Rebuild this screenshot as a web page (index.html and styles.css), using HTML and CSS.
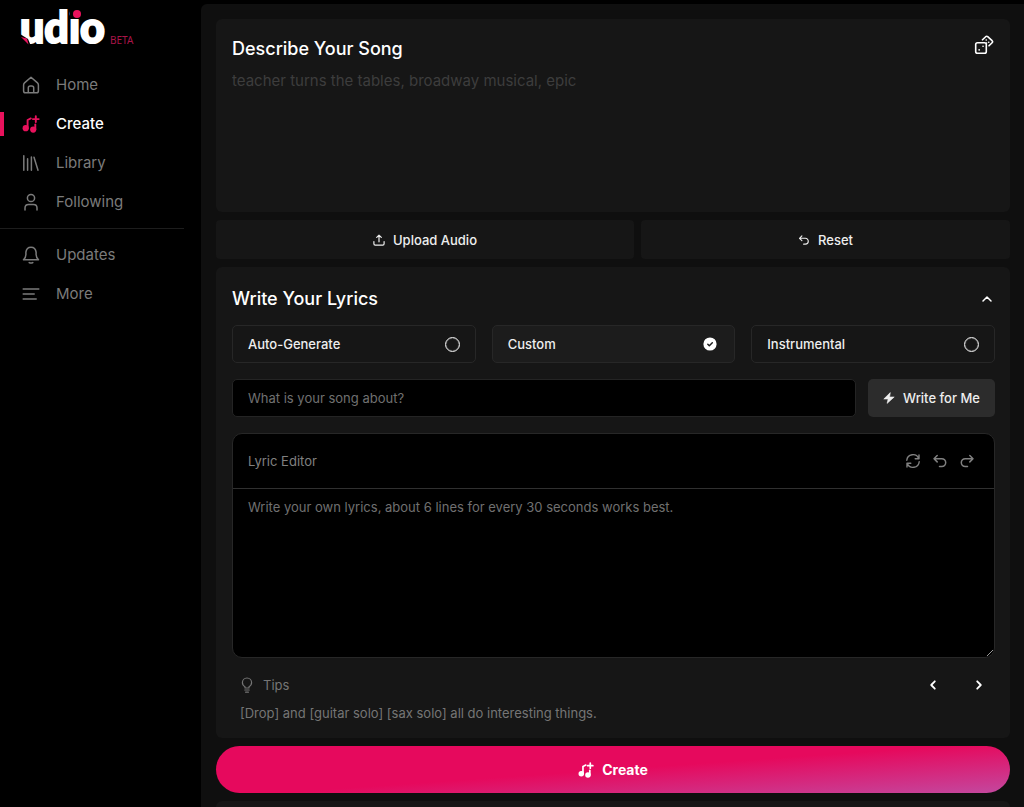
FILE: index.html
```html
<!DOCTYPE html>
<html lang="en">
<head>
<meta charset="utf-8">
<meta name="viewport" content="width=device-width, initial-scale=1">
<title>Udio - Create</title>
<link rel="stylesheet" href="styles.css">
</head>
<body>
<svg class="defs" width="0" height="0" aria-hidden="true">
  <symbol id="i-note" viewBox="0 0 18 18">
    <path d="M5.6 13.500V5L8.800 3.400" fill="none" stroke="currentColor" stroke-width="1.900" stroke-linecap="round"/>
    <path d="M13.300 14.500V9.500" fill="none" stroke="currentColor" stroke-width="1.900" stroke-linecap="round"/>
    <circle cx="3.700" cy="13.200" r="3.100" fill="currentColor"/>
    <circle cx="11.200" cy="14.600" r="3.100" fill="currentColor"/>
    <path d="M13.800 1.200v5.800M10.900 4.100h5.800" fill="none" stroke="currentColor" stroke-width="1.900" stroke-linecap="round"/>
  </symbol>
  <symbol id="i-undo" viewBox="0 0 16 16">
    <path d="M5.2 2.5 2 5.7l3.2 3.2M2 5.7h7.8a3.9 3.9 0 0 1 0 7.800H7.5" fill="none" stroke="currentColor" stroke-width="1.500" stroke-linecap="round" stroke-linejoin="round"/>
  </symbol>
</svg>
<div class="app">
  <aside class="sidebar">
    <a class="logo" href="#">
      <svg class="logo-mark" width="89" height="38" viewBox="0 0 89 38">
        <text class="logo-text" x="0" y="35">udio</text>
        <path d="M50 0h14v11H50Z" fill="#000"/>
        <circle cx="57" cy="6" r="4" fill="#e8125c"/>
        <path d="M0 26 8 31 11 38H0Z" fill="#000"/>
        <path d="M1 29 7 30.500 8.500 36.500Z" fill="#e8125c"/>
      </svg>
      <span class="beta">BETA</span>
    </a>
    <nav class="nav">
      <a class="nav-item" href="#"><svg width="18" height="18" viewBox="0 0 18 18"><path d="M2.5 6.9 9 1.2l6.5 5.7q.9.8.9 2v6q0 1.8-1.8 1.8H3.4q-1.8 0-1.8-1.8v-6q0-1.200.9-2ZM6.3 16.5v-4.7q0-1.900 1.900-1.900h1.600q1.900 0 1.900 1.900v4.700"/></svg>Home</a>
      <a class="nav-item active" href="#"><svg width="18" height="18"><use href="#i-note"/></svg>Create</a>
      <a class="nav-item" href="#"><svg width="18" height="18" viewBox="0 0 18 18"><path d="M1.800 1.800v14.400M5.600 4.800v11.400M9.400 3v13.200M12 3.300l4 12.900"/></svg>Library</a>
      <a class="nav-item" href="#"><svg width="18" height="18" viewBox="0 0 18 18"><circle cx="9" cy="5" r="3.600"/><path d="M3 17v-2q0-3.500 3.500-3.500h5q3.500 0 3.500 3.500v2"/></svg>Following</a>
    </nav>
    <nav class="nav nav-more">
      <a class="nav-item" href="#"><svg width="18" height="18" viewBox="0 0 18 18"><path d="M1.500 13.700h15q-2.400-2.200-2.400-5.200V6.200Q13.500 1.200 9 1.200T3.900 6.200v2.300q0 3-2.400 5.200ZM7.200 16.600q1.800 1 3.600 0"/></svg>Updates</a>
      <a class="nav-item" href="#"><svg width="18" height="18" viewBox="0 0 18 18"><path d="M1.200 4h15.600M1.200 9h11M1.200 14h13"/></svg>More</a>
    </nav>
  </aside>

  <main class="main">
    <section class="card prompt">
      <div class="prompt-body">
        <label class="heading" for="song">Describe Your Song</label>
        <textarea class="prompt-input" id="song" placeholder="teacher turns the tables, broadway musical, epic"></textarea>
      </div>
      <button class="icon-button" aria-label="Random prompt">
        <svg width="20" height="20" viewBox="0 0 20 20" fill="none" stroke="currentColor" stroke-width="1.600" stroke-linecap="round" stroke-linejoin="round"><rect x="1.700" y="7.700" width="10.600" height="10.600" rx="1.800"/><path d="m8.500 4.800 3.200-3.100q1-.8 2 0l4.400 4q1 1 0 2L15 10.800"/><path d="M9 11.200h.1M5.100 14.900h.1M12.200 5h.1M14.700 7.300h.1M12.500 8h.1"/></svg>
      </button>
    </section>

    <div class="actions">
      <button class="action upload"><svg width="12" height="12" viewBox="0 0 12 12" fill="none" stroke="currentColor" stroke-width="1.200" stroke-linecap="round" stroke-linejoin="round"><path d="M6 7.800V1.200M3.700 3.400 6 1.200l2.300 2.200M.9 7.600v2.200q0 1.300 1.300 1.300h7.600q1.300 0 1.300-1.300V7.600"/></svg>Upload Audio</button>
      <button class="action reset"><svg width="12" height="12"><use href="#i-undo"/></svg>Reset</button>
    </div>

    <section class="card lyrics">
      <header class="lyrics-head">
        <h2 class="heading">Write Your Lyrics</h2>
        <button class="icon-button" aria-label="Collapse"><svg width="16" height="16" viewBox="0 0 16 16" fill="none" stroke="currentColor" stroke-width="1.500" stroke-linecap="round" stroke-linejoin="round"><path d="m4 10 4-4 4 4"/></svg></button>
      </header>
      <div class="modes" role="radiogroup" aria-label="Lyrics mode">
        <label class="mode">Auto-Generate<input class="radio" type="radio" name="mode"></label>
        <label class="mode selected">Custom<input class="radio" type="radio" name="mode" checked><svg class="check" width="14" height="14" viewBox="0 0 14 14"><circle cx="7" cy="7" r="6.600" fill="#fff"/><path d="m4.800 7.200 1.500 1.500 3-3" fill="none" stroke="#1c1c1c" stroke-width="1.500" stroke-linecap="round" stroke-linejoin="round"/></svg></label>
        <label class="mode">Instrumental<input class="radio" type="radio" name="mode"></label>
      </div>
      <div class="topic">
        <input class="topic-input" type="text" aria-label="Song topic" placeholder="What is your song about?">
        <button class="write"><svg width="12" height="12" viewBox="0 0 12 12"><path d="M7.300.6.8 7h4.300l-1 4.400L11.200 5H6.600Z" fill="currentColor" stroke="currentColor" stroke-width=".6" stroke-linejoin="round"/></svg>Write for Me</button>
      </div>
      <div class="editor">
        <div class="editor-head">
          <label for="lyrics">Lyric Editor</label>
          <div class="tools">
            <button class="icon-button" aria-label="Refresh"><svg width="16" height="16" viewBox="0 0 16 16" fill="none" stroke="currentColor" stroke-width="1.400" stroke-linecap="round" stroke-linejoin="round"><path d="M14 2v3.800h-3.800M2 14v-3.800h3.800M1.800 7.300A6.200 6.200 0 0 1 13.700 5.500M14.200 8.700A6.200 6.200 0 0 1 2.300 10.500"/></svg></button>
            <button class="icon-button" aria-label="Undo"><svg width="16" height="16"><use href="#i-undo"/></svg></button>
            <button class="icon-button" aria-label="Redo"><svg class="flip" width="16" height="16"><use href="#i-undo"/></svg></button>
          </div>
        </div>
        <textarea class="editor-input" id="lyrics" placeholder="Write your own lyrics, about 6 lines for every 30 seconds works best."></textarea>
      </div>
      <div class="tips">
        <div class="tips-head">
          <svg width="14" height="16" viewBox="0 0 14 16" fill="none" stroke="currentColor" stroke-width="1.200" stroke-linecap="round" stroke-linejoin="round"><path d="M5 11V9.700Q2.400 8.500 2.400 5.600A4.600 4.600 0 0 1 11.600 5.600Q11.600 8.500 9 9.700V11ZM4.800 13h4.400M5.600 15.200h2.800"/></svg>
          <span>Tips</span>
          <div class="pager">
            <button class="icon-button" aria-label="Previous tip"><svg width="16" height="16" viewBox="0 0 16 16" fill="none" stroke="currentColor" stroke-width="1.800" stroke-linecap="round" stroke-linejoin="round"><path d="M9.800 4.300 6.200 8l3.600 3.700"/></svg></button>
            <button class="icon-button" aria-label="Next tip"><svg width="16" height="16" viewBox="0 0 16 16" fill="none" stroke="currentColor" stroke-width="1.800" stroke-linecap="round" stroke-linejoin="round"><path d="M6.200 4.300 9.800 8l-3.600 3.700"/></svg></button>
          </div>
        </div>
        <p class="tip">[Drop] and [guitar solo] [sax solo] all do interesting things.</p>
      </div>
    </section>

    <button class="create"><svg width="16" height="16"><use href="#i-note"/></svg>Create</button>
    <section class="card next"></section>
  </main>
</div>
</body>
</html>
```
FILE: styles.css
```css
* { box-sizing: border-box; }

body {
  margin: 0;
  background: #000;
  color: #fff;
  font: 400 13px/20px Inter, "Liberation Sans", sans-serif;
}

button, input, textarea { font: inherit; color: inherit; border: 0; padding: 0; margin: 0; }
button { background: none; cursor: pointer; }
button:focus-visible, input:focus-visible, textarea:focus-visible { outline: 1px solid #888; }
a { color: inherit; text-decoration: none; }
svg { display: block; flex: none; }
.defs { position: absolute; }

.app {
  display: grid;
  grid-template-columns: 201px minmax(0, 1fr);
  min-height: 100vh;
}

/* Sidebar */
.sidebar { padding-top: 8px; }
.logo { display: flex; align-items: flex-end; gap: 1px; padding-left: 20px; }
.logo-mark { overflow: visible; }
.logo-text { font: 900 43px Lato, sans-serif; fill: #fff; stroke: #fff; stroke-width: 2px; }
.beta { color: #a91548; font: 400 10px/12px "Noto Sans", sans-serif; }
.nav { display: flex; flex-direction: column; gap: 3px; padding-top: 21px; }
.nav-item {
  display: flex;
  align-items: center;
  gap: 16px;
  height: 36px;
  padding-left: 22px;
  color: #7b7b7b;
  font-size: 15px;
}
.nav-item svg { fill: none; stroke: currentColor; stroke-width: 1.5; stroke-linecap: round; stroke-linejoin: round; }
.nav-item.active {
  color: #fff;
  font-weight: 500;
  background: linear-gradient(#e8125c, #e8125c) left / 4px 24px no-repeat;
}
.nav-item.active svg { color: #e8125c; stroke: none; }
.nav-more { margin: 8px 17px 0 0; padding-top: 8px; border-top: 1px solid #1d1d1d; }

/* Main column */
.main {
  display: flex;
  flex-direction: column;
  gap: 8px;
  margin-top: 4px;
  padding: 15px 14px 0 15px;
  background: #0f0f0f;
  border-top-left-radius: 6px;
}
.card { background: #161616; border-radius: 6px; }
.heading { margin: 0; font-size: 18px; font-weight: 500; line-height: 24px; }
.icon-button { display: flex; flex: none; }

.prompt { display: flex; align-items: flex-start; padding: 16px; }
.prompt-body { display: flex; flex: 1; flex-direction: column; gap: 10px; padding-top: 2px; }
.prompt-input { height: 125px; background: none; resize: none; font-size: 15px; }
.prompt-input::placeholder { color: #3d3d3d; opacity: 1; }

.actions { display: flex; gap: 7px; }
.action {
  display: flex;
  align-items: center;
  justify-content: center;
  gap: 8px;
  height: 39px;
  background: #161616;
  border-radius: 4px;
  font-weight: 500;
  color: #eee;
}
.upload { flex: 418; }
.reset { flex: 369; }

.lyrics { display: flex; flex-direction: column; padding: 20px 15px 15px 16px; }
.lyrics-head { display: flex; align-items: center; justify-content: space-between; padding-bottom: 14px; }
.modes { display: grid; grid-template-columns: repeat(3, 1fr); gap: 16px; }
.mode {
  display: flex;
  align-items: center;
  justify-content: space-between;
  height: 38px;
  padding: 0 15px;
  border: 1px solid #272727;
  border-radius: 5px;
  font-weight: 500;
  color: #eee;
}
.mode.selected { position: relative; background: #1c1c1c; }
.radio { appearance: none; width: 15px; height: 15px; border: 1px solid #eee; border-radius: 50%; box-shadow: inset 0 0 1px #eee; }
.mode.selected .radio { border-color: transparent; box-shadow: none; }
.check { position: absolute; right: 17px; }

.topic { display: flex; gap: 12px; padding: 16px 0; }
.topic-input {
  flex: 1;
  min-width: 0;
  height: 38px;
  padding: 0 15px;
  background: #000;
  border: 1px solid #242424;
  border-radius: 5px;
}
.topic-input::placeholder, .editor-input::placeholder { color: #707070; opacity: 1; }
.write {
  display: flex;
  align-items: center;
  justify-content: center;
  gap: 8px;
  width: 127px;
  background: #2c2c2c;
  border-radius: 5px;
  font-weight: 500;
  color: #eee;
}

.editor { display: flex; flex-direction: column; border: 1px solid #272727; border-radius: 10px; background: #000; overflow: hidden; }
.editor-head {
  display: flex;
  align-items: center;
  justify-content: space-between;
  height: 55px;
  padding: 0 19px 0 15px;
  border-bottom: 1px solid #303030;
  color: #808080;
}
.tools { display: flex; gap: 11px; }
.flip { transform: scaleX(-1); }
.editor-input { height: 168px; padding: 8px 15px; background: none; resize: vertical; }

.tips { padding: 17px 8px 0; color: #757575; }
.tips-head { display: flex; align-items: center; gap: 9px; }
.pager { display: flex; gap: 30px; margin-left: auto; color: #fff; }
.tip { margin: 8px 0 0; }

.create {
  display: flex;
  align-items: center;
  justify-content: center;
  gap: 8px;
  height: 47px;
  border-radius: 24px;
  background: linear-gradient(176deg, #e6095d 50%, #c3489f 100%);
  font-size: 14px;
  font-weight: 700;
}
.next { flex: 1; min-height: 7px; border-radius: 6px 6px 0 0; }
```
